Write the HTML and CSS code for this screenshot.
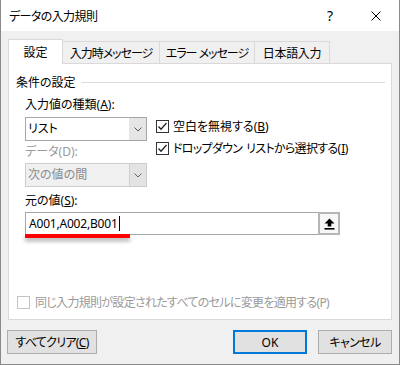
FILE: index.html
```html
<!DOCTYPE html>
<html lang="ja">
<head>
    <meta charset="UTF-8">
    <title>データの入力規則</title>
    <link rel="stylesheet" href="styles.css">
</head>
<body>
    <div class="window">
        <div class="titlebar">
            <span class="title">データの入力規則</span>
            <span class="help">?</span>
            <span class="close">
                <svg width="10" height="10" viewBox="0 0 10 10"><path d="M0.5 0.5L9.5 9.5M9.5 0.5L0.5 9.5" stroke="#000" stroke-width="1" fill="none"/></svg>
            </span>
        </div>

        <div class="body">
            <div class="tabs">
                <div class="tab active">設定</div>
                <div class="tab tab-input">入力時メッセージ</div>
                <div class="tab tab-error">エラー メッセージ</div>
                <div class="tab tab-ime">日本語入力</div>
            </div>

            <div class="panel">
                <div class="group-title">
                    <span>条件の設定</span>
                    <span class="rule"></span>
                </div>

                <div class="conditions">
                    <div class="label">入力値の種類(<u>A</u>):</div>
                    <div class="select">
                        <span class="select-value">リスト</span>
                        <span class="select-button">
                            <svg width="8" height="5" viewBox="0 0 8 5"><path d="M0.5 0.5L4 4L7.5 0.5" stroke="#555" fill="none"/></svg>
                        </span>
                    </div>
                    <div class="checks">
                        <div class="check">
                            <span class="box">
                                <svg width="11" height="11" viewBox="0 0 11 11"><path d="M1.5 5.5L4 8.2L9.5 2" stroke="#222" stroke-width="1.3" fill="none"/></svg>
                            </span>
                            <span>空白を無視する(<u>B</u>)</span>
                        </div>
                        <div class="check">
                            <span class="box">
                                <svg width="11" height="11" viewBox="0 0 11 11"><path d="M1.5 5.5L4 8.2L9.5 2" stroke="#222" stroke-width="1.3" fill="none"/></svg>
                            </span>
                            <span class="kana">ドロップダウン<span class="gap"></span>リストから選択する(<u>I</u>)</span>
                        </div>
                    </div>
                    <div class="label disabled">データ(D):</div>
                    <div class="select disabled">
                        <span class="select-value">次の値の間</span>
                        <span class="select-button">
                            <svg width="8" height="5" viewBox="0 0 8 5"><path d="M0.5 0.5L4 4L7.5 0.5" stroke="#666" fill="none"/></svg>
                        </span>
                    </div>
                </div>

                <div class="label source-label">元の値(<u>S</u>):</div>
                <div class="source">
                    <div class="source-value">A001,A002,B001<span class="caret"></span></div>
                    <div class="ref-button">
                        <svg width="11" height="12" viewBox="0 0 11 12"><path d="M5.5 0.5L10.5 5.5H7.3V8.5H3.7V5.5H0.5Z" fill="#000"/><rect x="0.5" y="10" width="10" height="1.6" fill="#000"/></svg>
                    </div>
                    <div class="marker"></div>
                </div>

                <div class="check disabled apply-all">
                    <span class="box"></span>
                    <span class="kana">同じ入力規則が設定されたすべてのセルに変更を適用する(P)</span>
                </div>
            </div>

            <div class="footer">
                <button class="button clear">すべてクリア(<u>C</u>)</button>
                <div class="footer-right">
                    <button class="button ok">OK</button>
                    <button class="button cancel">キャンセル</button>
                </div>
            </div>
        </div>
    </div>
</body>
</html>
```

FILE: styles.css
```css
* {
    box-sizing: border-box;
}

body {
    margin: 0;
    background: #ffffff;
    font-family: "Noto Sans", "Noto Sans CJK JP", sans-serif;
    font-size: 12px;
    font-feature-settings: "palt";
    color: #000;
}

.window {
    width: 400px;
    height: 365px;
    border: 1px solid #8a8a8a;
    border-top: none;
    background: #f0f0f0;
    display: flex;
    flex-direction: column;
}

/* タイトルバー */
.titlebar {
    height: 31px;
    flex-shrink: 0;
    background: #ffffff;
    display: flex;
    align-items: center;
    padding-left: 8px;
}

.title {
    flex: 1;
    letter-spacing: -0.6px;
}

.help,
.close {
    width: 46px;
    height: 100%;
    display: flex;
    align-items: center;
    justify-content: center;
}

.help {
    font-size: 14px;
}

.body {
    flex: 1;
    padding: 8px 7px 0;
    display: flex;
    flex-direction: column;
}

/* タブ */
.tabs {
    display: flex;
    align-items: flex-end;
    height: 25px;
    margin-bottom: -1px;
}

.tab {
    height: 22px;
    margin-bottom: 1px;
    border: 1px solid #d9d9d9;
    border-left: none;
    border-bottom: none;
    background: #f0f0f0;
    display: flex;
    align-items: center;
    justify-content: center;
    letter-spacing: -1px;
}

.tab.active {
    width: 55px;
    height: 25px;
    margin-bottom: 0;
    border-left: 1px solid #d9d9d9;
    background: #ffffff;
    position: relative;
    z-index: 1;
    letter-spacing: 0;
}

.tab-input {
    width: 97px;
}

.tab-error {
    width: 95px;
}

.tab-ime {
    width: 75px;
    letter-spacing: -0.3px;
}

.panel {
    height: 257px;
    border: 1px solid #d9d9d9;
    background: #ffffff;
    display: flex;
    flex-direction: column;
}

.group-title {
    margin-top: 10px;
    height: 16px;
    padding-left: 7px;
    padding-right: 6px;
    display: flex;
    align-items: center;
    gap: 5px;
}

.rule {
    flex: 1;
    height: 1px;
    background: #dcdcdc;
}

.conditions {
    display: grid;
    grid-template-columns: 122px 1fr;
    column-gap: 9px;
    padding-left: 16px;
}

.label {
    height: 16px;
    line-height: 16px;
    margin-top: 3px;
}

.conditions .label:first-child {
    margin-top: 7px;
}

.label.disabled {
    color: #9a9a9a;
}

.select {
    grid-column: 1;
    height: 24px;
    margin-top: 4px;
    border: 1px solid #a6a6a6;
    background: #ffffff;
    display: flex;
}

.select.disabled {
    margin-top: 3px;
    border-color: #cccccc;
    background: #f0f0f0;
    color: #8c8c8c;
}

.select-value {
    flex: 1;
    padding-left: 2px;
    line-height: 22px;
}

.select-button {
    width: 17px;
    background: #e5e5e5;
    display: flex;
    align-items: center;
    justify-content: center;
}

.select.disabled .select-button {
    background: #e3e3e3;
    border-left: 1px solid #d0d0d0;
}

.checks {
    grid-column: 2;
    grid-row: 2 / 5;
    align-self: start;
    display: flex;
    flex-direction: column;
    gap: 4px;
    margin-top: 4px;
}

.check {
    height: 18px;
    display: flex;
    align-items: center;
    gap: 4px;
}

.kana {
    letter-spacing: -0.7px;
}

.kana u {
    margin-left: 1px;
}

.gap {
    display: inline-block;
    width: 4px;
}

.box {
    width: 13px;
    height: 13px;
    border: 1px solid #333333;
    background: #ffffff;
    display: flex;
    align-items: center;
    justify-content: center;
}

.check.disabled {
    color: #9a9a9a;
}

.check.disabled .box {
    border-color: #c4c4c4;
}

.source-label {
    margin-top: 6px;
    margin-left: 16px;
}

/* 元の値 */
.source {
    width: 315px;
    height: 23px;
    margin-top: 3px;
    margin-left: 16px;
    border: 1px solid #a6a6a6;
    display: flex;
    position: relative;
}

.source-value {
    flex: 1;
    padding-left: 3px;
    line-height: 21px;
    letter-spacing: -0.2px;
}

.caret {
    display: inline-block;
    width: 1px;
    height: 15px;
    margin-left: 1px;
    background: #000;
    vertical-align: -3px;
}

.ref-button {
    width: 22px;
    margin: -1px -1px -1px 0;
    border: 2px solid #b6b6b6;
    background: #f7f7f7;
    display: flex;
    align-items: center;
    justify-content: center;
}

/* 赤い下線 */
.marker {
    position: absolute;
    left: -1px;
    top: 21px;
    width: 105px;
    height: 4px;
    background: #ff0000;
    box-shadow: 0 3px 4px rgba(0, 0, 0, 0.35);
}

.apply-all {
    margin-top: auto;
    margin-bottom: 8px;
    padding-left: 8px;
    gap: 5px;
}

/* ボタン */
.footer {
    margin-top: 10px;
    margin-left: -1px;
    display: flex;
    justify-content: space-between;
}

.footer-right {
    display: flex;
    gap: 11px;
}

.button {
    width: 74px;
    height: 24px;
    padding: 0;
    border: 1px solid #adadad;
    background: #e1e1e1;
    font-family: inherit;
    font-size: 12px;
    font-feature-settings: "palt";
    color: #000;
}

.button.clear {
    width: 90px;
    letter-spacing: -0.7px;
}

.button.cancel {
    letter-spacing: -0.6px;
}

.button.ok {
    border: 2px solid #0078d7;
}
```
